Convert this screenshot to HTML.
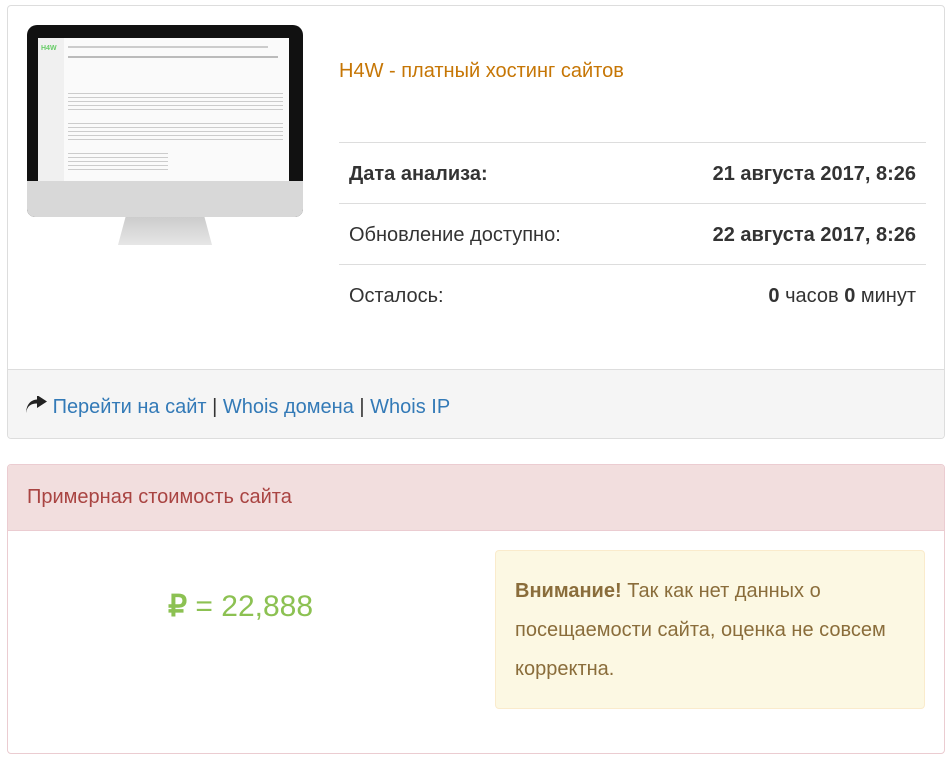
<!DOCTYPE html>
<html><head><meta charset="utf-8"><style>
*{box-sizing:border-box;margin:0;padding:0}
body{width:945px;height:759px;background:#fff;font-family:"Liberation Sans",Arial,sans-serif;color:#333;position:relative;overflow:hidden}
.p1{position:absolute;left:7px;top:5px;width:938px;height:434px;border:1px solid #ddd;border-radius:4px;overflow:hidden}
.foot{position:absolute;left:0;top:363px;width:100%;height:70px;background:#f5f5f5;border-top:1px solid #ddd}
.foot .t{position:absolute;left:18px;top:26px;font-size:20px;color:#333}
a{color:#337ab7;text-decoration:none}
.title{position:absolute;left:331px;top:54px;font-size:20px;color:#c67605}
.row{position:absolute;left:331px;width:587px;height:61px;border-top:1px solid #ddd;font-size:20px}
.row .l{position:absolute;left:10px;top:20px}
.row .r{position:absolute;right:10px;top:20px}
.p2{position:absolute;left:7px;top:464px;width:938px;height:290px;border:1px solid #ebccd1;border-radius:4px;overflow:hidden}
.p2 .h{height:66px;background:#f2dede;border-bottom:1px solid #ebccd1;color:#a94442;font-size:20px;padding:21px 0 0 19px}
.price{position:absolute;left:160px;top:124px;font-size:30px;color:#8cc152}
.warn{position:absolute;left:487px;top:85px;width:430px;height:159px;background:#fcf8e3;border:1px solid #faebcc;border-radius:4px;color:#8a6d3b;font-size:20px;line-height:39px;padding:21px 19px}
</style></head><body>
<div class="p1">
 <div style="position:absolute;left:19px;top:19px;width:276px;height:192px;background:#111;border-radius:10px 10px 8px 8px;overflow:hidden">
  <div style="position:absolute;left:11px;top:13px;width:251px;height:143px;background:#fafafa">
   <div style="position:absolute;left:0;top:0;width:26px;height:143px;background:#f0f0f0"></div>
   <div style="position:absolute;left:3px;top:7px;font-size:7px;color:#6c6;font-weight:bold">H4W</div>
   <div style="position:absolute;left:30px;top:8px;width:200px;height:2px;background:#ccc"></div>
   <div style="position:absolute;left:30px;top:18px;width:210px;height:2px;background:#bbb"></div>
   <div style="position:absolute;left:30px;top:55px;width:215px;height:20px;background:repeating-linear-gradient(#ccc 0 1px,transparent 1px 4px)"></div>
   <div style="position:absolute;left:30px;top:85px;width:215px;height:20px;background:repeating-linear-gradient(#ccc 0 1px,transparent 1px 4px)"></div>
   <div style="position:absolute;left:30px;top:115px;width:100px;height:20px;background:repeating-linear-gradient(#ccc 0 1px,transparent 1px 4px)"></div>
  </div>
  <div style="position:absolute;left:0;top:156px;width:276px;height:36px;background:#d8d8d8"></div>
 </div>
 <div style="position:absolute;left:110px;top:211px;width:94px;height:28px;background:linear-gradient(#ccc,#e6e6e6);clip-path:polygon(8% 0,92% 0,100% 100%,0 100%)"></div>
 <div class="title">H4W - платный хостинг сайтов</div>
 <div class="row" style="top:136px"><span class="l"><b>Дата анализа:</b></span><span class="r"><b>21 августа 2017, 8:26</b></span></div>
 <div class="row" style="top:197px"><span class="l">Обновление доступно:</span><span class="r"><b>22 августа 2017, 8:26</b></span></div>
 <div class="row" style="top:258px"><span class="l">Осталось:</span><span class="r"><b>0</b> часов <b>0</b> минут</span></div>
 <div class="foot"><div class="t"><svg width="21" height="18" viewBox="0 0 21 18" style="vertical-align:-1px"><path d="M0 17C1 10 5 7.5 11 7.5V12L21 5.5 11 -1V3.5C4 4 0.5 9 0 17Z" fill="#222"/></svg> <a>Перейти на сайт</a> | <a>Whois домена</a> | <a>Whois IP</a></div></div>
</div>
<div class="p2">
 <div class="h">Примерная стоимость сайта</div>
 <div class="price"><b>₽</b> = 22,888</div>
 <div class="warn"><b>Внимание!</b> Так как нет данных о посещаемости сайта, оценка не совсем корректна.</div>
</div>
</body></html>
